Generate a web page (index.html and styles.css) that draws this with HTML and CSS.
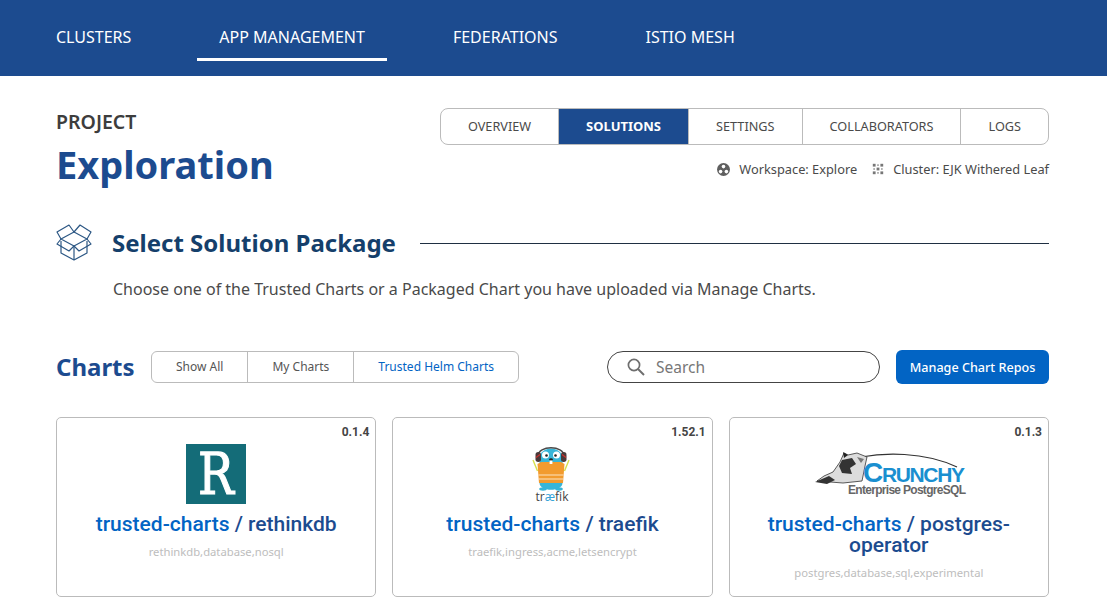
FILE: index.html
```html
<!DOCTYPE html>
<html lang="en">
<head>
  <meta charset="UTF-8" />
  <meta name="viewport" content="width=device-width, initial-scale=1.0"/>
  <title>App Management</title>
  <link rel="stylesheet" href="styles.css">
</head>
<body>
  <nav class="topnav">
    <a class="topnav-item">CLUSTERS</a>
    <a class="topnav-item active">APP MANAGEMENT</a>
    <a class="topnav-item">FEDERATIONS</a>
    <a class="topnav-item">ISTIO MESH</a>
  </nav>

  <main class="page">
    <header class="project">
      <div class="project-name">
        <div class="project-label">PROJECT</div>
        <h1>Exploration</h1>
      </div>
      <div class="project-side">
        <div class="tabs">
          <a class="tab">OVERVIEW</a>
          <a class="tab active">SOLUTIONS</a>
          <a class="tab">SETTINGS</a>
          <a class="tab">COLLABORATORS</a>
          <a class="tab">LOGS</a>
        </div>
        <div class="meta">
          <span class="meta-item">
            <svg width="13" height="13" viewBox="0 0 13 13">
              <circle cx="6.5" cy="6.5" r="6.5" fill="#5f5f5f"/>
              <circle cx="6.5" cy="3.6" r="1.8" fill="#fff"/>
              <circle cx="3.6" cy="8.6" r="1.8" fill="#fff"/>
              <circle cx="9.4" cy="8.6" r="1.8" fill="#fff"/>
            </svg>
            Workspace: Explore
          </span>
          <span class="meta-item">
            <svg width="12" height="12" viewBox="0 0 12 12" fill="#777">
              <rect x="0.8" y="0.8" width="2.8" height="2.8"/>
              <rect x="8.4" y="0.8" width="2.8" height="2.8"/>
              <rect x="4.6" y="4.6" width="2.8" height="2.8"/>
              <rect x="0.8" y="8.4" width="2.8" height="2.8"/>
              <rect x="8.4" y="8.4" width="2.8" height="2.8"/>
              <rect x="5.3" y="1.4" width="1.4" height="1.4"/>
              <rect x="1.4" y="5.3" width="1.4" height="1.4"/>
              <rect x="9.2" y="5.3" width="1.4" height="1.4"/>
              <rect x="5.3" y="9.2" width="1.4" height="1.4"/>
            </svg>
            Cluster: EJK Withered Leaf
          </span>
        </div>
      </div>
    </header>

    <section class="package">
      <div class="package-head">
        <svg class="package-icon" width="36" height="37" viewBox="0 0 36 37" fill="none" stroke="#2c5784" stroke-width="1.2" stroke-linejoin="round">
          <path d="M5 17V29l13 7 13-7V17"/>
          <path d="M18 22v14"/>
          <path d="M18 8 5 15l13 7 13-7z"/>
          <path d="M5 15 1 8 13 1l5 7 6-7 11 7-4 7"/>
          <path d="M5 15 1 20l12 7 5-5 5 5 12-7-4-5"/>
        </svg>
        <h2>Select Solution Package</h2>
        <div class="package-line"></div>
      </div>
      <p>Choose one of the Trusted Charts or a Packaged Chart you have uploaded via Manage Charts.</p>
    </section>

    <section class="charts-bar">
      <h3>Charts</h3>
      <div class="filters">
        <a class="filter">Show All</a>
        <a class="filter">My Charts</a>
        <a class="filter active">Trusted Helm Charts</a>
      </div>
      <div class="search">
        <svg width="18" height="18" viewBox="0 0 18 18" fill="none" stroke="#6e6e6e" stroke-width="1.7">
          <circle cx="7" cy="7" r="5.6"/>
          <path d="M11 11l6 6" stroke-width="2"/>
        </svg>
        <span>Search</span>
      </div>
      <button class="manage-btn">Manage Chart Repos</button>
    </section>

    <section class="cards">
      <article class="card">
        <div class="card-version">0.1.4</div>
        <div class="card-logo">
          <div class="logo-rethink"><span>R</span></div>
        </div>
        <div class="card-title">trusted-charts <span>/ rethinkdb</span></div>
        <div class="card-tags">rethinkdb,database,nosql</div>
      </article>

      <article class="card">
        <div class="card-version">1.52.1</div>
        <div class="card-logo">
          <svg width="60" height="60" viewBox="0 0 60 60">
            <path d="M11 16 15.500 27M47 16 42.500 27" stroke="#d6e04c" stroke-width="1.4"/>
            <path d="M17.500 15C17.500 1 40.500 1 40.500 15V39C40.500 48 17.500 48 17.500 39z" fill="#36b5d8"/>
            <path d="M16 12C16 1 42 1 42 12" fill="none" stroke="#4a4a4a" stroke-width="1.4"/>
            <rect x="13.500" y="8" width="5.500" height="10" rx="2.700" fill="#4a3a3a"/>
            <rect x="39" y="8" width="5.500" height="10" rx="2.700" fill="#4a3a3a"/>
            <path d="M18 10.500 14 13.500M40 10.500 44 13.500" stroke="#c8322f" stroke-width="1.300"/>
            <path d="M15.500 20 19 18h20l3.500 2-1.500 19H17z" fill="#f29b2e"/>
            <path d="M16.500 31H41.500M16.500 35H41.500" stroke="#fbe3c0" stroke-width="1.200"/>
            <circle cx="23.500" cy="11" r="3.500" fill="#fff"/>
            <circle cx="34.500" cy="11" r="3.500" fill="#fff"/>
            <circle cx="24.500" cy="11.500" r="1.300" fill="#222"/>
            <circle cx="33.500" cy="11.500" r="1.300" fill="#222"/>
            <ellipse cx="29" cy="15.500" rx="1.900" ry="1.300" fill="#222"/>
            <rect x="27.600" y="16.500" width="2.800" height="3.500" fill="#fff"/>
            <ellipse cx="21" cy="45" rx="3.800" ry="1.700" fill="#36b5d8"/>
            <ellipse cx="37" cy="45" rx="3.800" ry="1.700" fill="#36b5d8"/>
            <text x="30" y="57" text-anchor="middle" class="traefik-word">tr<tspan fill="#36a3d8">æ</tspan>fik</text>
          </svg>
        </div>
        <div class="card-title">trusted-charts <span>/ traefik</span></div>
        <div class="card-tags">traefik,ingress,acme,letsencrypt</div>
      </article>

      <article class="card">
        <div class="card-version">0.1.3</div>
        <div class="card-logo">
          <svg width="156" height="52" viewBox="0 0 156 52">
            <path d="M50 9C72 5 112 3 146 19" fill="none" stroke="#333" stroke-width="1.200"/>
            <path d="M6 33 13 28 22 24 29 14 33 5 37 7 46 5 56 9 54 18 51 33 32 35z" fill="#dcdcdc" stroke="#333" stroke-width="0.800"/>
            <path d="M31 12 41 10 45 16 39 20 41 26 31 25 28 18z" fill="#333"/>
            <path d="M4 34 18 28 24 32 16 36z" fill="#333"/>
            <path d="M32 4 33 10 37 7z" fill="#222"/>
            <path d="M46 9 53 11 50 15z" fill="#777"/>
            <text x="52" y="34" class="crunchy-word" textLength="102"><tspan class="crunchy-cap">C</tspan>RUNCHY</text>
            <text x="37" y="46" class="crunchy-sub" textLength="118">Enterprise PostgreSQL</text>
          </svg>
        </div>
        <div class="card-title">trusted-charts <span>/ postgres-operator</span></div>
        <div class="card-tags">postgres,database,sql,experimental</div>
      </article>
    </section>
  </main>
</body>
</html>
```

FILE: styles.css
```css
* { margin: 0; padding: 0; box-sizing: border-box; }
html, body { height: 100%; overflow: hidden; }
body {
  font-family: "Noto Sans", sans-serif;
  background: #fff;
  color: #444;
}

/* top bar */
.topnav {
  height: 76px;
  background: #1c4b8f;
  display: flex;
  padding-left: 34px;
  gap: 44px;
}
.topnav-item {
  height: 61px;
  padding: 26px 22px 0;
  color: #fff;
  font-size: 16px;
  line-height: 22px;
  white-space: nowrap;
}
.topnav-item.active { border-bottom: 3px solid #fff; }

.page { padding: 0 58px 0 56px; }

/* project header */
.project {
  display: flex;
  justify-content: space-between;
  padding-top: 32px;
}
.project-label {
  font-size: 19.5px;
  font-weight: 600;
  line-height: 28px;
  color: #3d3d3d;
}
.project-name h1 {
  font-size: 38px;
  font-weight: 700;
  line-height: 56px;
  color: #1c4b8f;
}
.project-side {
  display: flex;
  flex-direction: column;
  align-items: flex-end;
}
.tabs {
  display: flex;
  height: 37px;
  border: 1px solid #bbb;
  border-radius: 8px;
  overflow: hidden;
}
.tab {
  padding: 0 27px;
  font-size: 12.7px;
  line-height: 35px;
  color: #4a4a4a;
  border-left: 1px solid #bbb;
  white-space: nowrap;
}
.tab:first-child { border-left: none; }
.tab.active {
  background: #1c4b8f;
  color: #fff;
  font-size: 13px;
  font-weight: 700;
}
.meta {
  display: flex;
  gap: 15px;
  margin-top: 15px;
  font-size: 12.8px;
  line-height: 18px;
  color: #4a4a4a;
}
.meta-item {
  display: flex;
  align-items: center;
  gap: 9px;
}

/* select package */
.package { margin-top: 31px; }
.package-head {
  display: flex;
  align-items: center;
  height: 38px;
}
.package-icon { flex: none; }
.package-head h2 {
  margin-left: 20px;
  font-size: 24px;
  font-weight: 700;
  color: #153f6b;
  white-space: nowrap;
}
.package-line {
  flex: 1;
  height: 1px;
  margin: 2px 0 0 24px;
  background: #1f2f42;
}
.package p {
  margin: 17px 0 0 57px;
  font-size: 16px;
  line-height: 22px;
  color: #4a4a4a;
}

/* charts toolbar */
.charts-bar {
  display: flex;
  align-items: center;
  height: 34px;
  margin-top: 50px;
}
.charts-bar h3 {
  width: 95px;
  padding-bottom: 2px;
  font-size: 24px;
  font-weight: 700;
  color: #1c4b8f;
}
.filters {
  display: flex;
  height: 32px;
  border: 1px solid #bbb;
  border-radius: 6px;
  overflow: hidden;
}
.filter {
  padding: 0 24px;
  font-size: 12px;
  line-height: 30px;
  color: #555;
  border-left: 1px solid #bbb;
  white-space: nowrap;
}
.filter:first-child { border-left: none; }
.filter.active { color: #0264c4; }
.search {
  display: flex;
  align-items: center;
  gap: 11px;
  width: 273px;
  height: 32px;
  margin-left: 88px;
  padding-left: 19px;
  border: 1px solid #444;
  border-radius: 16px;
  font-size: 15.5px;
  color: #777;
}
.manage-btn {
  width: 153px;
  height: 34px;
  margin-left: 16px;
  background: #0264c4;
  color: #fff;
  border: none;
  border-radius: 6px;
  font-family: inherit;
  font-size: 12.6px;
  font-weight: 500;
}

/* chart cards */
.cards {
  display: grid;
  grid-template-columns: repeat(3, 1fr);
  gap: 16px;
  margin-top: 33px;
}
.card {
  position: relative;
  height: 180px;
  border: 1px solid #bbb;
  border-radius: 5px;
  padding: 26px 20px 0;
  text-align: center;
}
.card-version {
  position: absolute;
  top: 7px;
  right: 6px;
  font-family: Roboto, sans-serif;
  font-size: 12px;
  font-weight: 700;
  color: #444;
}
.card-logo {
  display: flex;
  justify-content: center;
  align-items: center;
  height: 60px;
}
.logo-rethink {
  width: 60px;
  height: 60px;
  background: #146c78;
  color: #fff;
  font-family: "DejaVu Serif", serif;
  font-size: 58px;
  line-height: 60px;
  text-align: center;
  -webkit-text-stroke: 1.2px #fff;
}
.logo-rethink span {
  display: block;
  transform: scaleX(0.82);
}
.card-title {
  margin-top: 10px;
  font-family: Roboto, sans-serif;
  font-size: 21px;
  font-weight: 500;
  line-height: 21px;
  color: #0264c4;
}
.card-title span { color: #1c4b8f; }
.card-tags {
  margin-top: 9px;
  font-size: 11.25px;
  line-height: 15px;
  color: #bdbdbd;
}
.traefik-word {
  font-family: "Open Sans", sans-serif;
  font-size: 12px;
  fill: #444;
}
.crunchy-word {
  font-family: "Liberation Sans", sans-serif;
  font-size: 21px;
  font-weight: 700;
  fill: #1a8fd0;
}
.crunchy-cap { font-size: 28px; }
.crunchy-sub {
  font-family: "Liberation Sans", sans-serif;
  font-size: 12px;
  font-weight: 700;
  fill: #666;
}
```
